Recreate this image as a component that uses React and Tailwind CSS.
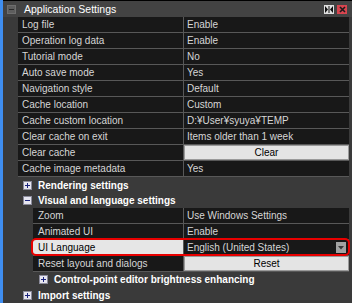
import React from "react";

const appRows = [
  ["Log file", "Enable"],
  ["Operation log data", "Enable"],
  ["Tutorial mode", "No"],
  ["Auto save mode", "Yes"],
  ["Navigation style", "Default"],
  ["Cache location", "Custom"],
  ["Cache custom location", "D:¥User¥syuya¥TEMP"],
  ["Clear cache on exit", "Items older than 1 week"],
  ["Clear cache", { button: "Clear" }],
  ["Cache image metadata", "Yes"],
];

function Box({ plus }) {
  return (
    <span className="w-[9px] h-[9px] bg-[#e6e6f0] border border-[#8a8a9a] flex items-center justify-center shrink-0">
      <svg width="7" height="7" viewBox="0 0 7 7">
        <rect x="1" y="3" width="5" height="1" fill="#1a237e" />
        {plus && <rect x="3" y="1" width="1" height="5" fill="#1a237e" />}
      </svg>
    </span>
  );
}

function Btn({ label }) {
  return (
    <div className="flex-1 h-full bg-[#e4e4e4] border border-[#9a9a9a] text-black flex items-center justify-center pt-[1px]">
      {label}
    </div>
  );
}

function Row({ label, value, indent, highlight }) {
  const isBtn = typeof value === "object";
  return (
    <div className="relative h-[16px] flex border-b border-[#585858] bg-[#181818]">
      <div
        className={`${indent ? "w-[151px] pl-[5px]" : "w-[166px] pl-[4px]"} ${
          highlight ? "bg-[#e6e6e6] text-black" : "text-[#d6d6d6]"
        } flex items-center pt-[1px] border-r border-[#585858] whitespace-nowrap`}
      >
        {label}
      </div>
      {isBtn ? (
        <div className="flex-1 flex">
          <Btn label={value.button} />
        </div>
      ) : (
        <div className="flex-1 flex items-center pl-[3px] text-[#d6d6d6] whitespace-nowrap">
          <span className="flex-1 pt-[1px]">{value}</span>
          {highlight && (
            <span className="w-[10px] h-[11px] mr-[3px] bg-[#a2a2a2] flex items-center justify-center">
              <svg width="6" height="4" viewBox="0 0 6 4">
                <path d="M0 0 L6 0 L3 3.5 Z" fill="#3a3a3a" />
              </svg>
            </span>
          )}
        </div>
      )}
      {highlight && (
        <div className="absolute -left-[2px] -right-[1px] -top-[2px] -bottom-[1px] border-2 border-[#e80000] rounded-[5px] pointer-events-none" />
      )}
    </div>
  );
}

function Group({ label, open, pad }) {
  return (
    <div className={`h-[16px] flex items-center gap-[6px] ${pad} text-white font-bold whitespace-nowrap`}>
      <Box plus={!open} />
      <span className="pt-[1px]">{label}</span>
    </div>
  );
}

export default function App() {
  return (
    <div className="w-[352px] h-[303px] overflow-hidden bg-[#3a3a3a] flex text-[10px] leading-none font-['Liberation_Sans',Arial,sans-serif]">
      <div className="w-[3px] bg-[#3f8ef0] shrink-0" />
      <div className="flex-1 flex flex-col border-t border-black">
        <div className="h-[17px] bg-[#434343] flex items-center pl-[4px] pr-[5px]">
          <span className="w-[9px] h-[9px] bg-[#5e5e5e] border border-[#6e6e6e] flex items-center justify-center">
            <span className="w-[5px] h-[1px] bg-[#2a2a2a]" />
          </span>
          <span className="ml-[8px] text-white text-[10.5px] flex-1 pt-[1px]">Application Settings</span>
          <span className="w-[10px] h-[9px] bg-[#e0e0e0] flex items-center justify-center">
            <svg width="8" height="7" viewBox="0 0 8 7">
              <path d="M0 0 L3 3.5 L0 7 Z M8 0 L5 3.5 L8 7 Z" fill="#111" />
              <rect x="3.5" y="0" width="1" height="7" fill="#111" />
            </svg>
          </span>
          <span className="ml-[3px] w-[10px] h-[9px] bg-[#d8454f] flex items-center justify-center">
            <svg width="7" height="7" viewBox="0 0 7 7">
              <path d="M1 1 L6 6 M6 1 L1 6" stroke="#1a1a1a" strokeWidth="1.6" />
            </svg>
          </span>
        </div>

        <div className="ml-[15px] mr-[3px] flex flex-col">
          {appRows.map(([l, v]) => (
            <Row key={l} label={l} value={v} />
          ))}
        </div>

        <Group label="Rendering settings" pad="pl-[20px]" />
        <Group label="Visual and language settings" open pad="pl-[20px]" />

        <div className="ml-[30px] mr-[3px] flex flex-col">
          <Row indent label="Zoom" value="Use Windows Settings" />
          <Row indent label="Animated UI" value="Enable" />
          <Row indent highlight label="UI Language" value="English (United States)" />
          <Row indent label="Reset layout and dialogs" value={{ button: "Reset" }} />
        </div>

        <Group label="Control-point editor brightness enhancing" pad="pl-[36px]" />
        <Group label="Import settings" pad="pl-[20px]" />
      </div>
    </div>
  );
}
